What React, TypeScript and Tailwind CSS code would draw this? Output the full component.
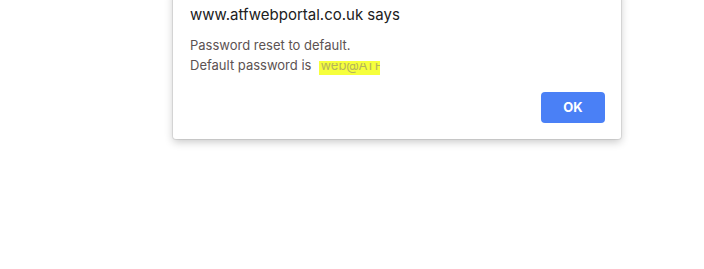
import React from "react";

export default function App() {
  return (
    <div className="w-[704px] h-[269px] bg-white overflow-hidden relative" style={{ fontFamily: "Inter, 'Liberation Sans', Arial, sans-serif" }}>
      <div className="absolute left-[173px] top-[-10px] w-[448px] bg-white rounded-[3px] shadow-[0_0_0_1px_rgba(0,0,0,0.08),0_3px_8px_rgba(0,0,0,0.22)] flex flex-col pl-[17px] pr-[16px] pb-[16px]">
        <div className="mt-[16px] text-[15px] leading-[18px] text-[#202020]">www.atfwebportal.co.uk says</div>
        <div className="mt-[11px] text-[13px] leading-[20px] text-[#5c5252]">
          <div>Password reset to default.</div>
          <div className="flex items-start">
            <span>Default password is</span>
            <span className="relative ml-[8px] mt-[6px] inline-block h-[14px] w-[61px] bg-[#f6ff3c]">
              <span className="absolute left-[1px] right-0 top-[2px] h-[12px] overflow-hidden">
                <span className="block mt-[-4px] leading-[13px] text-[#b5b55a] whitespace-nowrap">web@ATF</span>
              </span>
            </span>
          </div>
        </div>
        <div className="flex justify-end mt-[17px]">
          <button className="w-[64px] h-[31px] rounded-[4px] bg-[#4a80f6] text-white text-[13px] font-bold">OK</button>
        </div>
      </div>
    </div>
  );
}
